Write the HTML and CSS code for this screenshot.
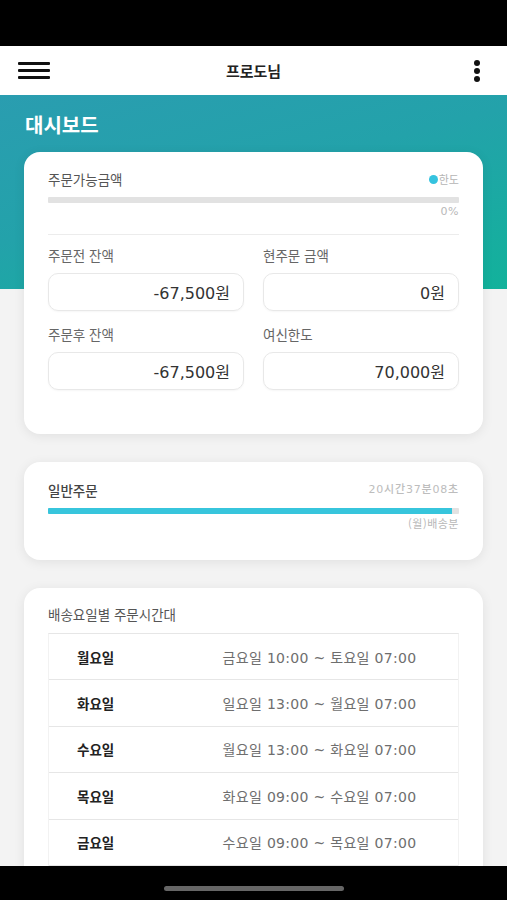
FILE: index.html
```html
<!DOCTYPE html>
<html lang="ko">
<head>
    <meta charset="UTF-8">
    <meta name="viewport" content="width=device-width, initial-scale=1.0">
    <title>대시보드</title>
    <link rel="stylesheet" href="styles.css">
</head>
<body>
    <div class="status-bar"></div>

    <header class="app-header">
        <div class="header-side">
            <span class="hamburger"><i></i><i></i><i></i></span>
        </div>
        <div class="header-title">프로도님</div>
        <div class="header-side right">
            <span class="kebab"><i></i><i></i><i></i></span>
        </div>
    </header>

    <main class="main">
        <div class="banner">
            <h1>대시보드</h1>
        </div>

        <div class="cards">
            <section class="card card-balance">
                <div class="card-head">
                    <span class="card-title">주문가능금액</span>
                    <span class="legend"><span class="legend-dot"></span>한도</span>
                </div>
                <div class="progress"><div class="progress-fill" style="width: 0%"></div></div>
                <div class="progress-note num">0%</div>
                <div class="divider"></div>

                <div class="field-grid">
                    <div class="field">
                        <div class="field-label">주문전 잔액</div>
                        <div class="field-box num">-67,500원</div>
                    </div>
                    <div class="field">
                        <div class="field-label">현주문 금액</div>
                        <div class="field-box num">0원</div>
                    </div>
                    <div class="field">
                        <div class="field-label">주문후 잔액</div>
                        <div class="field-box num">-67,500원</div>
                    </div>
                    <div class="field">
                        <div class="field-label">여신한도</div>
                        <div class="field-box num">70,000원</div>
                    </div>
                </div>
            </section>

            <section class="card card-order">
                <div class="card-head">
                    <span class="card-title strong">일반주문</span>
                    <span class="timer num">20시간37분08초</span>
                </div>
                <div class="progress"><div class="progress-fill" style="width: 98.3%"></div></div>
                <div class="progress-note">(월)배송분</div>
            </section>

            <section class="card card-schedule">
                <div class="card-title">배송요일별 주문시간대</div>
                <div class="schedule">
                    <div class="schedule-row">
                        <span class="day">월요일</span>
                        <span class="time num">금요일 10:00 ~ 토요일 07:00</span>
                    </div>
                    <div class="schedule-row">
                        <span class="day">화요일</span>
                        <span class="time num">일요일 13:00 ~ 월요일 07:00</span>
                    </div>
                    <div class="schedule-row">
                        <span class="day">수요일</span>
                        <span class="time num">월요일 13:00 ~ 화요일 07:00</span>
                    </div>
                    <div class="schedule-row">
                        <span class="day">목요일</span>
                        <span class="time num">화요일 09:00 ~ 수요일 07:00</span>
                    </div>
                    <div class="schedule-row">
                        <span class="day">금요일</span>
                        <span class="time num">수요일 09:00 ~ 목요일 07:00</span>
                    </div>
                </div>
            </section>
        </div>
    </main>

    <div class="home-bar"><span class="home-indicator"></span></div>
</body>
</html>
```

FILE: styles.css
```css
* {
    margin: 0;
    padding: 0;
    box-sizing: border-box;
}

body {
    font-family: "Noto Sans CJK KR", "Noto Sans", sans-serif;
    background: #f3f3f3;
    color: #333;
    width: 507px;
    overflow: hidden;
}

/* 숫자는 폭이 넓은 글꼴로 */
.num {
    font-family: "DejaVu Sans", "Noto Sans CJK KR", sans-serif;
}

.status-bar {
    height: 46px;
    background: #000;
}

/* 상단 헤더 */
.app-header {
    height: 49px;
    background: #fff;
    display: flex;
    align-items: center;
    justify-content: space-between;
    padding: 0 18px;
}

.header-side {
    width: 40px;
    display: flex;
}

.header-side.right {
    justify-content: flex-end;
}

.header-title {
    font-size: 15px;
    font-weight: 700;
    color: #222;
}

.hamburger {
    display: flex;
    flex-direction: column;
    gap: 4px;
    width: 32px;
}

.hamburger i {
    display: block;
    height: 3px;
    background: #111;
    border-radius: 1px;
}

.kebab {
    display: flex;
    flex-direction: column;
    gap: 2px;
    margin-right: 9px;
}

.kebab i {
    display: block;
    width: 6px;
    height: 6px;
    border-radius: 50%;
    background: #111;
}

/* 본문 */
.main {
    padding-bottom: 60px;
}

.banner {
    height: 194px;
    padding: 17px 25px 0;
    background: linear-gradient(165deg, #2a9db0 0%, #23a2aa 45%, #12b29b 100%);
}

.banner h1 {
    font-size: 20px;
    font-weight: 700;
    color: #fff;
    line-height: 26px;
}

.cards {
    margin-top: -137px;
    padding: 0 24px;
    display: flex;
    flex-direction: column;
    gap: 28px;
}

.card {
    background: #fff;
    border-radius: 16px;
    box-shadow: 0 2px 12px rgba(0, 0, 0, 0.08);
    padding: 19px 24px 44px;
}

.card-head {
    display: flex;
    justify-content: space-between;
    align-items: center;
    line-height: 16px;
}

.card-title {
    font-size: 13.5px;
    color: #555;
    line-height: 16px;
}

.card-title.strong {
    font-weight: 500;
    color: #444;
}

.legend {
    font-size: 11px;
    color: #b5b5b5;
    display: flex;
    align-items: center;
}

.legend-dot {
    width: 9px;
    height: 9px;
    border-radius: 50%;
    background: #35c3df;
    margin-right: 1px;
}

.progress {
    margin-top: 10px;
    height: 6px;
    background: #e2e2e2;
    border-radius: 1px;
    overflow: hidden;
}

.progress-fill {
    height: 100%;
    background: #37c5dc;
}

.progress-note {
    margin-top: 2px;
    text-align: right;
    font-size: 11px;
    line-height: 14px;
    color: #b8b8b8;
    letter-spacing: 0.5px;
}

.divider {
    margin-top: 15px;
    height: 1px;
    background: #ececec;
}

.field-grid {
    display: grid;
    grid-template-columns: 1fr 1fr;
    column-gap: 19px;
    row-gap: 15px;
    margin-top: 12px;
}

.field-label {
    font-size: 13.5px;
    line-height: 16px;
    color: #666;
}

.field-box {
    margin-top: 10px;
    height: 38px;
    border: 1px solid #e8e8e8;
    border-radius: 10px;
    box-shadow: 0 1px 2px rgba(0, 0, 0, 0.04);
    display: flex;
    align-items: center;
    justify-content: flex-end;
    padding-right: 13px;
    font-size: 16px;
    color: #333;
}

.card-order {
    padding: 20px 24px 30px;
}

.timer {
    font-size: 11px;
    font-weight: 500;
    color: #bdbdbd;
    letter-spacing: 0.8px;
}

.card-order .progress-fill {
    border-radius: 0;
}

.card-schedule {
    padding: 18px 24px 40px;
}

.schedule {
    margin-top: 11px;
    border-top: 1px solid #e6e6e6;
    border-left: 1px solid #f2f2f2;
    border-right: 1px solid #f2f2f2;
}

.schedule-row {
    height: 46.4px;
    display: grid;
    grid-template-columns: 132px 1fr;
    align-items: center;
    border-bottom: 1px solid #e6e6e6;
}

.day {
    padding-left: 28px;
    font-size: 13.5px;
    font-weight: 700;
    color: #222;
}

.time {
    text-align: center;
    font-size: 14px;
    color: #6e6e6e;
    letter-spacing: 0.3px;
}

/* 하단 홈 바 */
.home-bar {
    position: fixed;
    left: 0;
    right: 0;
    bottom: 0;
    height: 34px;
    background: #000;
    display: flex;
    justify-content: center;
    padding-top: 20px;
}

.home-indicator {
    width: 180px;
    height: 5px;
    border-radius: 3px;
    background: #666;
}
```
